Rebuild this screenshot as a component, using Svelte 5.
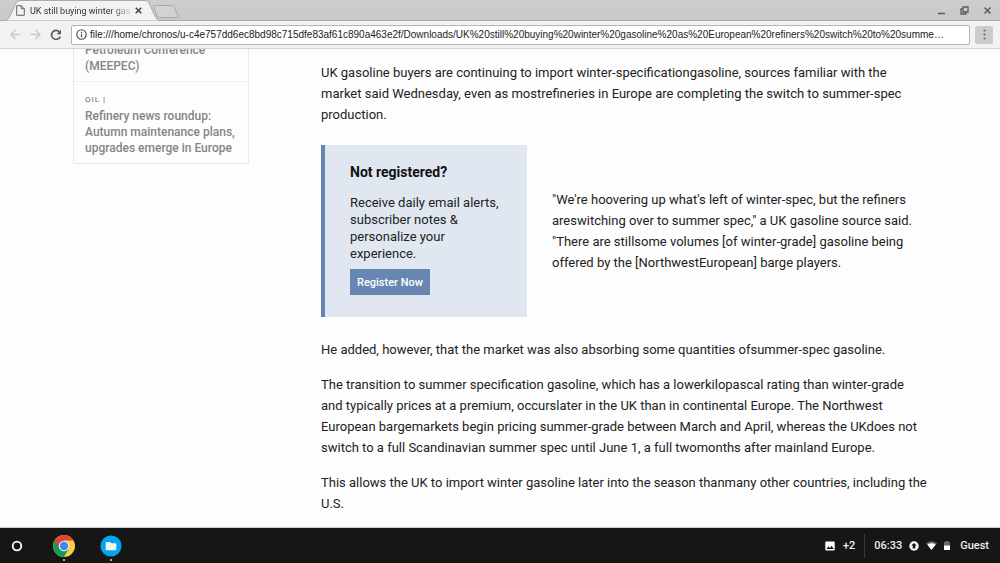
<script>
  const url =
    'file:///home/chronos/u-c4e757dd6ec8bd98c715dfe83af61c890a463e2f/Downloads/UK%20still%20buying%20winter%20gasoline%20as%20European%20refiners%20switch%20to%20summe…';

  const related = [
    { topic: '', lines: ['Petroleum Conference', '(MEEPEC)'] },
    { topic: 'OIL |', lines: ['Refinery news roundup:', 'Autumn maintenance plans,', 'upgrades emerge in Europe'] }
  ];

  const intro = [
    'UK gasoline buyers are continuing to import winter-specificationgasoline, sources familiar with the',
    'market said Wednesday, even as mostrefineries in Europe are completing the switch to summer-spec',
    'production.'
  ];

  const quote = [
    '"We\'re hoovering up what\'s left of winter-spec, but the refiners',
    'areswitching over to summer spec," a UK gasoline source said.',
    '"There are stillsome volumes [of winter-grade] gasoline being',
    'offered by the [NorthwestEuropean] barge players.'
  ];

  const paragraphs = [
    ['He added, however, that the market was also absorbing some quantities ofsummer-spec gasoline.'],
    [
      'The transition to summer specification gasoline, which has a lowerkilopascal rating than winter-grade',
      'and typically prices at a premium, occurslater in the UK than in continental Europe. The Northwest',
      'European bargemarkets begin pricing summer-grade between March and April, whereas the UKdoes not',
      'switch to a full Scandinavian summer spec until June 1, a full twomonths after mainland Europe.'
    ],
    [
      'This allows the UK to import winter gasoline later into the season thanmany other countries, including the',
      'U.S.'
    ]
  ];
</script>

{#snippet lines(list)}
  {#each list as line, i}{#if i > 0}<br />{/if}{line}{/each}
{/snippet}

<div class="desktop">
  <header>
    <div class="tabstrip">
      <div class="tab">
        <svg class="tab-shape" viewBox="0 0 156 21" preserveAspectRatio="none" aria-hidden="true">
          <path d="M0 21C4 20 5 18 6 16L12 3Q13 .5 16 .5H141Q144 .5 145 3L151 16Q153 20 156 21Z" fill="#f2f2f2" stroke="#aaa" />
        </svg>
        <svg class="doc" width="9" height="11" viewBox="0 0 9 11" fill="none" stroke="#666" aria-hidden="true">
          <path d="M.7.7H5.3L8.3 3.7V10.3H.7ZM5.3.7V3.7H8.3" />
        </svg>
        <span class="tab-title">UK still buying winter gas</span>
        <button class="tab-close" aria-label="Close tab">
          <svg width="7" height="7" viewBox="0 0 7 7" stroke="#444" stroke-width="1.5"><path d="M.7.7 6.3 6.3M6.3.7.7 6.3" /></svg>
        </button>
      </div>
      <button class="new-tab" aria-label="New tab">
        <svg width="26" height="13" viewBox="0 0 26 13"><path d="M2 .5H18Q20 .5 21 2L25 11Q25.500 12.500 24 12.500H7Q5 12.500 4 11L.7 2Q.3.5 2 .5Z" fill="#d2d2d2" stroke="#a8a8a8" /></svg>
      </button>
      <div class="window-controls">
        <button aria-label="Minimize"><svg width="9" height="9" viewBox="0 0 9 9"><path d="M1 7.500H8" stroke="#5b5b5b" stroke-width="1.500" /></svg></button>
        <button aria-label="Restore">
          <svg width="9" height="9" viewBox="0 0 9 9" fill="none" stroke="#5b5b5b" stroke-width="1.3"><path d="M3 1H8V6H3ZM3 3H1V8H6V6" /></svg>
        </button>
        <button aria-label="Close"><svg width="9" height="9" viewBox="0 0 9 9"><path d="M1.500 1.500 7.500 7.500M7.500 1.500 1.500 7.500" stroke="#5b5b5b" stroke-width="1.500" /></svg></button>
      </div>
    </div>

    <div class="toolbar">
      <button aria-label="Back" disabled>
        <svg width="11" height="11" viewBox="0 0 11 11" fill="none" stroke="#cacaca" stroke-width="1.400"><path d="M10.500 5.500H1.200M5.500 1 1 5.500 5.500 10" /></svg>
      </button>
      <button aria-label="Forward" disabled>
        <svg width="11" height="11" viewBox="0 0 11 11" fill="none" stroke="#cacaca" stroke-width="1.400"><path d="M.5 5.500H9.800M5.500 1 10 5.500 5.500 10" /></svg>
      </button>
      <button aria-label="Reload">
        <svg width="12" height="12" viewBox="0 0 12 12"><path d="M9.300 2.800A4.500 4.500 0 1 0 10.300 7.400" fill="none" stroke="#5a5a5a" stroke-width="1.600" /><path d="M11 .7V5.200H6.500Z" fill="#5a5a5a" /></svg>
      </button>
      <div class="omnibox">
        <svg width="11" height="11" viewBox="0 0 11 11" fill="none" stroke="#4d4d4d" aria-hidden="true">
          <circle cx="5.500" cy="5.500" r="4.700" stroke-width="1.100" /><path d="M5.500 4.800V8.200M5.500 2.700V3.900" stroke-width="1.200" />
        </svg>
        <input type="text" aria-label="Address" value={url} />
      </div>
      <button class="menu" aria-label="Menu">
        <svg width="3" height="11" viewBox="0 0 3 11" fill="#6a6a6a"><circle cx="1.500" cy="1.500" r="1.100" /><circle cx="1.500" cy="5.500" r="1.100" /><circle cx="1.500" cy="9.500" r="1.100" /></svg>
      </button>
    </div>
  </header>

  <main>
    <aside>
      {#each related as item}
        <div class="related">
          {#if item.topic}<span class="topic">{item.topic}</span>{/if}
          <a href="#top">{@render lines(item.lines)}</a>
        </div>
      {/each}
    </aside>

    <article>
      <p>{@render lines(intro)}</p>
      <div class="split">
        <section class="register">
          <h2>Not registered?</h2>
          <p>Receive daily email alerts,<br />subscriber notes &amp;<br />personalize your<br />experience.</p>
          <button>Register Now</button>
        </section>
        <p>{@render lines(quote)}</p>
      </div>
      {#each paragraphs as paragraph}
        <p>{@render lines(paragraph)}</p>
      {/each}
    </article>
  </main>

  <footer>
    <button aria-label="Launcher">
      <svg width="12" height="12" viewBox="0 0 12 12"><circle cx="6" cy="6" r="4.300" fill="none" stroke="#fff" stroke-width="1.800" /></svg>
    </button>
    <button class="app" aria-label="Chrome">
      <svg width="22" height="22" viewBox="0 0 22 22">
        <circle cx="11" cy="11" r="11" fill="#ffcd40" />
        <path d="M11 11 1.500 5.500A11 11 0 0 0 11 22L15.800 13.700Z" fill="#0f9d58" />
        <path d="M11 11 6.200 13.600 1.500 5.500A11 11 0 0 1 20.500 5.500H11Z" fill="#db4437" />
        <circle cx="11" cy="11" r="5.300" fill="#f1f1f1" />
        <circle cx="11" cy="11" r="4.200" fill="#4285f4" />
      </svg>
    </button>
    <button class="app" aria-label="Files">
      <svg width="22" height="22" viewBox="0 0 22 22">
        <circle cx="11" cy="11" r="10.500" fill="#05a5f0" />
        <path d="M6.500 7H10L11.300 8.300H15.500Q16.300 8.300 16.300 9.200V14.500Q16.300 15.300 15.500 15.300H6.500Q5.700 15.300 5.700 14.500V7.800Q5.700 7 6.500 7Z" fill="#f4f4f4" />
      </svg>
    </button>

    <button class="notices">
      <svg width="10" height="10" viewBox="0 0 10 10"><rect x=".3" y=".5" width="9.400" height="9" rx="1" fill="#fff" /><path d="M1.500 8 3.500 5.300 5 7 6.700 4.700 8.700 8Z" fill="#161616" /></svg>
      <span>+2</span>
    </button>
    <button class="tray">
      <span class="clock">06:33</span>
      <svg width="10" height="10" viewBox="0 0 10 10"><circle cx="5" cy="5" r="4.700" fill="#fff" /><path d="M5 2 7.800 4.600H6.300V7.500H3.700V4.600H2.200Z" fill="#161616" /></svg>
      <svg width="11" height="9" viewBox="0 0 11 9"><path d="M0 2.200Q5.500-1.600 11 2.200L5.500 9Z" fill="#666" /><path d="M1.300 3.500Q5.500 1 9.700 3.500L5.500 9Z" fill="#fff" /></svg>
      <svg width="6" height="9" viewBox="0 0 6 9"><path d="M1.500 0H4.500V1H6V9H0V1H1.500Z" fill="#666" /><path d="M0 4.500H6V9H0Z" fill="#fff" /></svg>
      <span class="user">Guest</span>
    </button>
  </footer>
</div>

<style>
  :global(body) {
    margin: 0;
    background: #fdfdfd;
  }

  .desktop {
    display: flex;
    flex-direction: column;
    min-height: 100vh;
    overflow: hidden;
    font-family: Roboto, "Liberation Sans", sans-serif;
  }

  button {
    display: flex;
    align-items: center;
    padding: 0;
    border: 0;
    background: none;
    font: inherit;
    color: inherit;
  }

  .tabstrip {
    display: flex;
    align-items: flex-end;
    height: 21px;
    padding-left: 4px;
    background: linear-gradient(#cecece, #c8c8c8);
    border-bottom: 1px solid #aaa;
    box-sizing: border-box;
  }

  .tab {
    position: relative;
    display: flex;
    align-items: center;
    gap: 5px;
    width: 156px;
    height: 21px;
    margin-bottom: -1px;
    padding: 0 18px 0 12px;
    box-sizing: border-box;
    font-size: 9px;
    color: #333;
  }

  .tab-shape {
    position: absolute;
    inset: 0;
    width: 100%;
    height: 100%;
  }

  .doc,
  .tab-title,
  .tab-close {
    position: relative;
    flex-shrink: 0;
  }

  .tab-title {
    flex: 1;
    white-space: nowrap;
    mask-image: linear-gradient(to right, #000 80%, transparent 105%);
  }

  .new-tab {
    margin: 0 0 2px -7px;
  }

  .window-controls {
    display: flex;
    gap: 14px;
    margin-left: auto;
    padding: 0 8px 5px 0;
  }

  .toolbar {
    display: flex;
    align-items: center;
    gap: 9px;
    height: 28px;
    padding: 0 7px 0 10px;
    background: #f2f2f2;
    border-bottom: 1px solid #d4d4d4;
    box-sizing: border-box;
  }

  .omnibox {
    display: flex;
    flex: 1;
    align-items: center;
    gap: 3px;
    height: 20px;
    margin-right: -4px;
    padding: 0 3px 0 4px;
    background: #fff;
    border: 1px solid #b4b4b4;
    border-radius: 2px;
    box-sizing: border-box;
  }

  .omnibox input {
    flex: 1;
    min-width: 0;
    padding: 0;
    border: 0;
    outline: none;
    background: none;
    font: 10px "Liberation Sans", Arial, sans-serif;
    color: #222;
    text-overflow: ellipsis;
  }

  .menu {
    justify-content: center;
    width: 18px;
    height: 18px;
    border-radius: 2px;
    background: #ccc;
  }

  main {
    display: flex;
    flex: 1;
    align-items: flex-start;
    gap: 72px;
    padding: 0 73px;
    overflow: hidden;
    border-bottom: 1px solid #ccc;
    white-space: nowrap;
    color: #222;
  }

  aside {
    width: 176px;
    flex-shrink: 0;
    margin-top: -7px;
    border: 1px solid #eaeaea;
    border-top: 0;
    box-sizing: border-box;
  }

  .related {
    padding: 0 11px 7px;
  }

  .related + .related {
    padding-top: 12px;
    border-top: 1px solid #f0f0f0;
  }

  .related a {
    display: block;
    font-size: 12px;
    font-weight: 500;
    line-height: 16px;
    color: #858585;
    text-decoration: none;
  }

  .topic {
    display: block;
    margin-bottom: 2px;
    font-size: 8px;
    line-height: 12px;
    letter-spacing: 1px;
    color: #666;
  }

  article {
    flex: 1;
    min-width: 0;
    padding-top: 13px;
    font-size: 13px;
    line-height: 21px;
  }

  article p {
    margin: 0 0 14px;
  }

  article > p:last-child {
    margin: 0;
  }

  .split {
    display: flex;
    align-items: center;
    gap: 25px;
    margin: 20px 0 22px;
  }

  .split > p {
    margin: 0;
  }

  .register {
    width: 206px;
    height: 172px;
    flex-shrink: 0;
    padding: 18px 0 0 25px;
    background: #e0e7f0;
    border-left: 4px solid #6787b2;
    box-sizing: border-box;
  }

  .register h2 {
    margin: 0 0 12px;
    font-size: 14px;
    line-height: 19px;
    color: #111;
  }

  .register p {
    margin: 0 0 7px;
    line-height: 17px;
  }

  .register button {
    height: 26px;
    padding: 0 7px;
    background: #6787b2;
    font-size: 11px;
    font-weight: 500;
    color: #fff;
  }

  footer {
    display: flex;
    align-items: center;
    height: 35px;
    padding: 0 11px;
    background: #161616;
    font-size: 11px;
    font-weight: 500;
    color: #eee;
  }

  .app {
    position: relative;
    margin-left: 30px;
  }

  .app + .app {
    margin-left: 25px;
  }

  .app::after {
    content: "";
    position: absolute;
    left: 10px;
    bottom: -4px;
    width: 2px;
    height: 2px;
    border-radius: 1px;
    background: #ddd;
  }

  .notices {
    gap: 8px;
    height: 24px;
    margin-left: auto;
    padding-right: 9px;
    border-right: 1px solid #3b3b3b;
  }

  .tray {
    gap: 7px;
    padding-left: 9px;
  }

  .user {
    margin-left: 3px;
  }
</style>
